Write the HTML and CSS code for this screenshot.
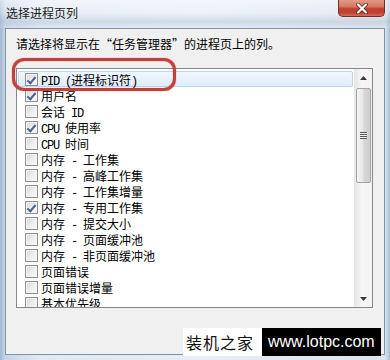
FILE: index.html
```html
<!DOCTYPE html>
<html lang="zh-CN">
<head>
<meta charset="utf-8">
<title>选择进程页列</title>
<link rel="stylesheet" href="styles.css">
</head>
<body>
<div class="window">
  <div class="titlebar">
    <span class="title">选择进程页列</span>
    <div class="close">
      <svg width="14" height="11" viewBox="0 0 14 11"><path d="M3 1.5 L11 9.5 M11 1.5 L3 9.5" stroke="#5a1a14" stroke-width="3.8" stroke-linecap="round"/><path d="M3 1.5 L11 9.5 M11 1.5 L3 9.5" stroke="#ffffff" stroke-width="2.3" stroke-linecap="round"/></svg>
    </div>
  </div>
  <div class="client">
    <div class="prompt">请选择将显示在“任务管理器”的进程页上的列。</div>
    <div class="listbox">
      <div class="items">
        <div class="row sel"><span class="cb on"></span><span class="t"><span class="a">PID (</span><span>进程标识符</span><span class="a">)</span></span></div>
        <div class="row"><span class="cb on"></span><span class="t"><span>用户名</span></span></div>
        <div class="row"><span class="cb"></span><span class="t"><span>会话</span><span class="a"> ID</span></span></div>
        <div class="row"><span class="cb on"></span><span class="t"><span class="a">CPU </span><span>使用率</span></span></div>
        <div class="row"><span class="cb"></span><span class="t"><span class="a">CPU </span><span>时间</span></span></div>
        <div class="row"><span class="cb"></span><span class="t"><span>内存</span><span class="a"> - </span><span>工作集</span></span></div>
        <div class="row"><span class="cb"></span><span class="t"><span>内存</span><span class="a"> - </span><span>高峰工作集</span></span></div>
        <div class="row"><span class="cb"></span><span class="t"><span>内存</span><span class="a"> - </span><span>工作集增量</span></span></div>
        <div class="row"><span class="cb on"></span><span class="t"><span>内存</span><span class="a"> - </span><span>专用工作集</span></span></div>
        <div class="row"><span class="cb"></span><span class="t"><span>内存</span><span class="a"> - </span><span>提交大小</span></span></div>
        <div class="row"><span class="cb"></span><span class="t"><span>内存</span><span class="a"> - </span><span>页面缓冲池</span></span></div>
        <div class="row"><span class="cb"></span><span class="t"><span>内存</span><span class="a"> - </span><span>非页面缓冲池</span></span></div>
        <div class="row"><span class="cb"></span><span class="t"><span>页面错误</span></span></div>
        <div class="row"><span class="cb"></span><span class="t"><span>页面错误增量</span></span></div>
        <div class="row"><span class="cb"></span><span class="t"><span>基本优先级</span></span></div>
      </div>
      <div class="scrollbar">
        <div class="sbtn"><svg width="7" height="4" viewBox="0 0 7 4"><path d="M0 4 L3.5 0 L7 4 Z" fill="#3a3a3a"/></svg></div>
        <div class="track">
          <div class="thumb"><span class="grip"></span></div>
        </div>
        <div class="sbtn"><svg width="7" height="4" viewBox="0 0 7 4"><path d="M0 0 L7 0 L3.5 4 Z" fill="#3a3a3a"/></svg></div>
      </div>
    </div>
  </div>
  <div class="mark"></div>
  <div class="watermark"><span class="wm-cn">装机之家</span><span class="wm-url">www.lotpc.com</span></div>
</div>
</body>
</html>
```
FILE: styles.css
```css
html, body {
  margin: 0;
  padding: 0;
  background: #b8cbe0;
}
.window {
  position: relative;
  width: 390px;
  height: 360px;
  display: flex;
  flex-direction: column;
  background: linear-gradient(90deg, #9fb7cf 0px, #c6d6e6 5px, #dfe9f3 40px, #e6eef6 200px, #d9e4ef 385px, #a8bfd6 390px);
  overflow: hidden;
  font-family: "Noto Sans CJK SC", "Liberation Sans", sans-serif;
}
.titlebar {
  height: 28px;
  flex: none;
  display: flex;
  align-items: flex-start;
  padding: 0 6px 0 6px;
  background: linear-gradient(180deg, rgba(255,255,255,0.55) 0px, rgba(240,245,250,0.35) 14px, rgba(180,190,204,0.4) 22px, rgba(220,230,240,0.3) 28px);
}
.title {
  font-size: 12px;
  line-height: 14px;
  margin-top: 6px;
  color: #1a1a1a;
}
.close {
  margin-left: auto;
  width: 47px;
  height: 17px;
  box-sizing: border-box;
  border: 1px solid #7a2a20;
  border-top: none;
  border-radius: 0 0 5px 5px;
  background: linear-gradient(180deg, #e39a86 0%, #d67a64 40%, #c03f30 55%, #bf4232 80%, #d4705a 100%);
  display: flex;
  align-items: center;
  justify-content: center;
  margin-right: -1px;
}
.client {
  flex: 1;
  margin: 0 5px 5px 5px;
  box-sizing: border-box;
  border: 1px solid #7f93a9;
  background: #f0f0f0;
  padding: 7px 11px 0 10px;
  display: flex;
  flex-direction: column;
}
.prompt {
  font-size: 12px;
  line-height: 16px;
  height: 16px;
  color: #000;
  white-space: nowrap;
}
.listbox {
  margin-top: 16px;
  height: 240px;
  box-sizing: border-box;
  border: 1px solid #828790;
  background: #fff;
  display: flex;
}
.items {
  flex: 1;
  overflow: hidden;
  padding-top: 2px;
}
.row {
  height: 16px;
  display: flex;
  align-items: center;
  padding-left: 7px;
  margin: 0 1px;
  box-sizing: border-box;
}
.row.sel {
  border: 1px solid #b9d3f0;
  border-radius: 2px;
  background: linear-gradient(180deg, #f1f7fe, #dfecfc);
  padding-left: 6px;
}
.cb {
  width: 13px;
  height: 13px;
  box-sizing: border-box;
  border: 1px solid #8e8f8f;
  background: linear-gradient(135deg, #d9d9d9 0%, #ececec 50%, #fafafa 100%);
  box-shadow: inset 0 0 0 1px #f4f4f4;
  flex: none;
  position: relative;
}
.cb.on::after {
  content: "";
  position: absolute;
  left: 3px;
  top: 1px;
  width: 3px;
  height: 7px;
  border: solid #4b5f95;
  border-width: 0 2px 2px 0;
  transform: rotate(40deg);
}
.t {
  margin-left: 3px;
  display: flex;
  align-items: baseline;
  height: 15px;
  font-size: 12px;
  line-height: 15px;
  color: #000;
  white-space: pre;
}
.a {
  font-family: "Liberation Mono", monospace;
  font-size: 12px;
  line-height: 15px;
  letter-spacing: -1.2px;
}
.scrollbar {
  width: 17px;
  flex: none;
  display: flex;
  flex-direction: column;
  background: linear-gradient(90deg, #e6e6e6, #f7f7f7 40%, #f3f3f3);
  border-left: 1px solid #e6e6e6;
}
.sbtn {
  height: 17px;
  flex: none;
  display: flex;
  align-items: center;
  justify-content: center;
}
.track {
  flex: 1;
  padding-top: 2px;
}
.thumb {
  margin: 0 1px;
  height: 95px;
  box-sizing: border-box;
  border: 1px solid #a3a3a3;
  border-radius: 2px;
  background: linear-gradient(90deg, #f4f4f4 0%, #e6e6e6 45%, #d6d6d6 55%, #cfcfcf 100%);
  display: flex;
  align-items: center;
  justify-content: center;
}
.grip {
  width: 7px;
  height: 7px;
  background: repeating-linear-gradient(180deg, #5a5a5a 0px, #5a5a5a 1px, #eeeeee 1px, #eeeeee 2px);
}
.mark {
  position: absolute;
  left: 12px;
  top: 58px;
  width: 164px;
  height: 33px;
  box-sizing: border-box;
  border: 3px solid #c3403d;
  border-radius: 12px;
  box-shadow: 0 0 1px #c3403d, inset 0 0 1px #c3403d;
}
.watermark {
  position: absolute;
  left: 183px;
  top: 328px;
  height: 28px;
  display: flex;
}
.wm-cn {
  width: 79px;
  background: #fff;
  font-size: 16px;
  line-height: 28px;
  letter-spacing: 1px;
  padding-left: 3px;
  box-sizing: border-box;
  color: #111;
}
.wm-url {
  width: 119px;
  background: #000;
  color: #fff;
  font-family: "Liberation Sans", sans-serif;
  font-size: 16px;
  line-height: 28px;
  padding-left: 6px;
  box-sizing: border-box;
}
```
